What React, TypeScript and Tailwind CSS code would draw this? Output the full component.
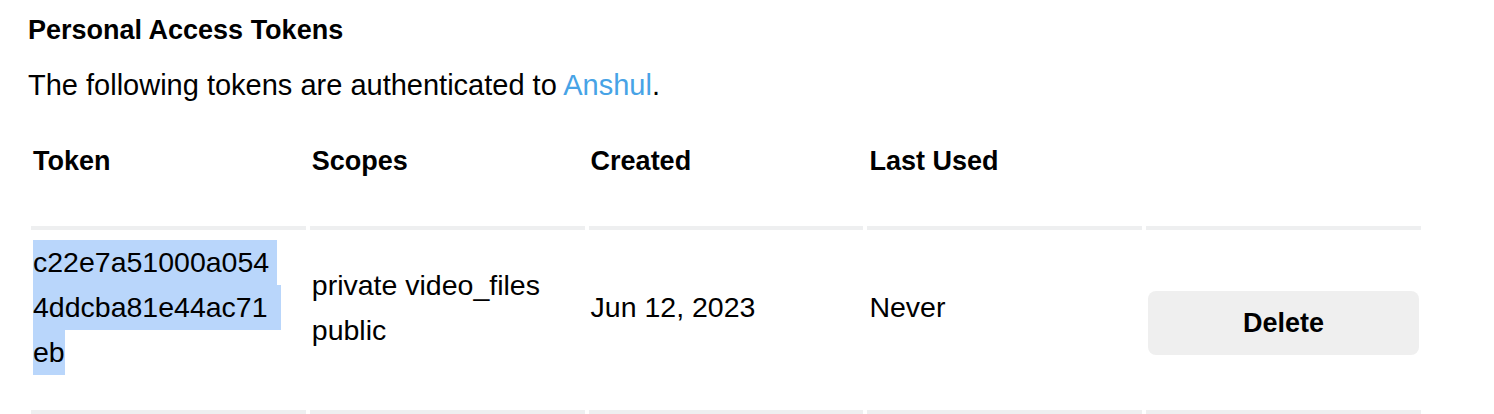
import React from "react";

const tokens = [
  {
    lines: ["c22e7a51000a054", "4ddcba81e44ac71", "eb"],
    scopes: ["private video_files", "public"],
    created: "Jun 12, 2023",
    lastUsed: "Never",
  },
];

const App: React.FC = () => {
  return (
    <div className="min-h-screen bg-white pl-7 pt-[14px] text-black font-['Liberation_Sans',Arial,sans-serif]">
      <h2 className="text-[27px] font-bold leading-[32px]">
        Personal Access Tokens
      </h2>
      <p className="mt-[17px] text-[29px] leading-[45px]">
        The following tokens are authenticated to{" "}
        <a href="#" className="text-[#47a3e6]">
          Anshul
        </a>
        .
      </p>

      <table className="mt-[31px] -ml-[1px] w-[1398px] table-fixed border-separate border-spacing-x-[4px] border-spacing-y-0">
        <thead>
          <tr className="text-left text-[27px] font-bold leading-[45px]">
            <th className="px-[2px] pb-[42px] font-bold">Token</th>
            <th className="px-[2px] pb-[42px] font-bold">Scopes</th>
            <th className="px-[2px] pb-[42px] font-bold">Created</th>
            <th className="px-[2px] pb-[42px] font-bold">Last Used</th>
            <th className="px-[2px] pb-[42px]" />
          </tr>
        </thead>
        <tbody>
          {tokens.map((t) => (
            <tr key={t.lines.join("")} className="text-[28.5px] leading-[45px]">
              <td className="border-y-4 border-[#eeeff0] px-[2px] pt-[10px] pb-[35px] align-middle">
                {t.lines.map((line, i) => (
                  <div
                    key={line}
                    className={`w-fit bg-[#b9d6fb] ${
                      i === 0 ? "pr-[8px]" : i === 1 ? "pr-[13px]" : "pr-0"
                    }`}
                  >
                    {line}
                  </div>
                ))}
              </td>
              <td className="border-y-4 border-[#eeeff0] px-[2px] pt-[10px] pb-[35px] align-middle">
                {t.scopes.map((s) => (
                  <div key={s}>{s}</div>
                ))}
              </td>
              <td className="border-y-4 border-[#eeeff0] px-[2px] pt-[10px] pb-[35px] align-middle">
                {t.created}
              </td>
              <td className="border-y-4 border-[#eeeff0] px-[2px] pt-[10px] pb-[35px] align-middle">
                {t.lastUsed}
              </td>
              <td className="border-y-4 border-[#eeeff0] px-[2px] pt-[10px] pb-[35px] align-middle">
                <button className="mt-[31px] flex h-[64px] w-full items-center justify-center rounded-[8px] bg-[#efefef] text-[27px] font-bold">
                  Delete
                </button>
              </td>
            </tr>
          ))}
        </tbody>
      </table>
    </div>
  );
};

export default App;
